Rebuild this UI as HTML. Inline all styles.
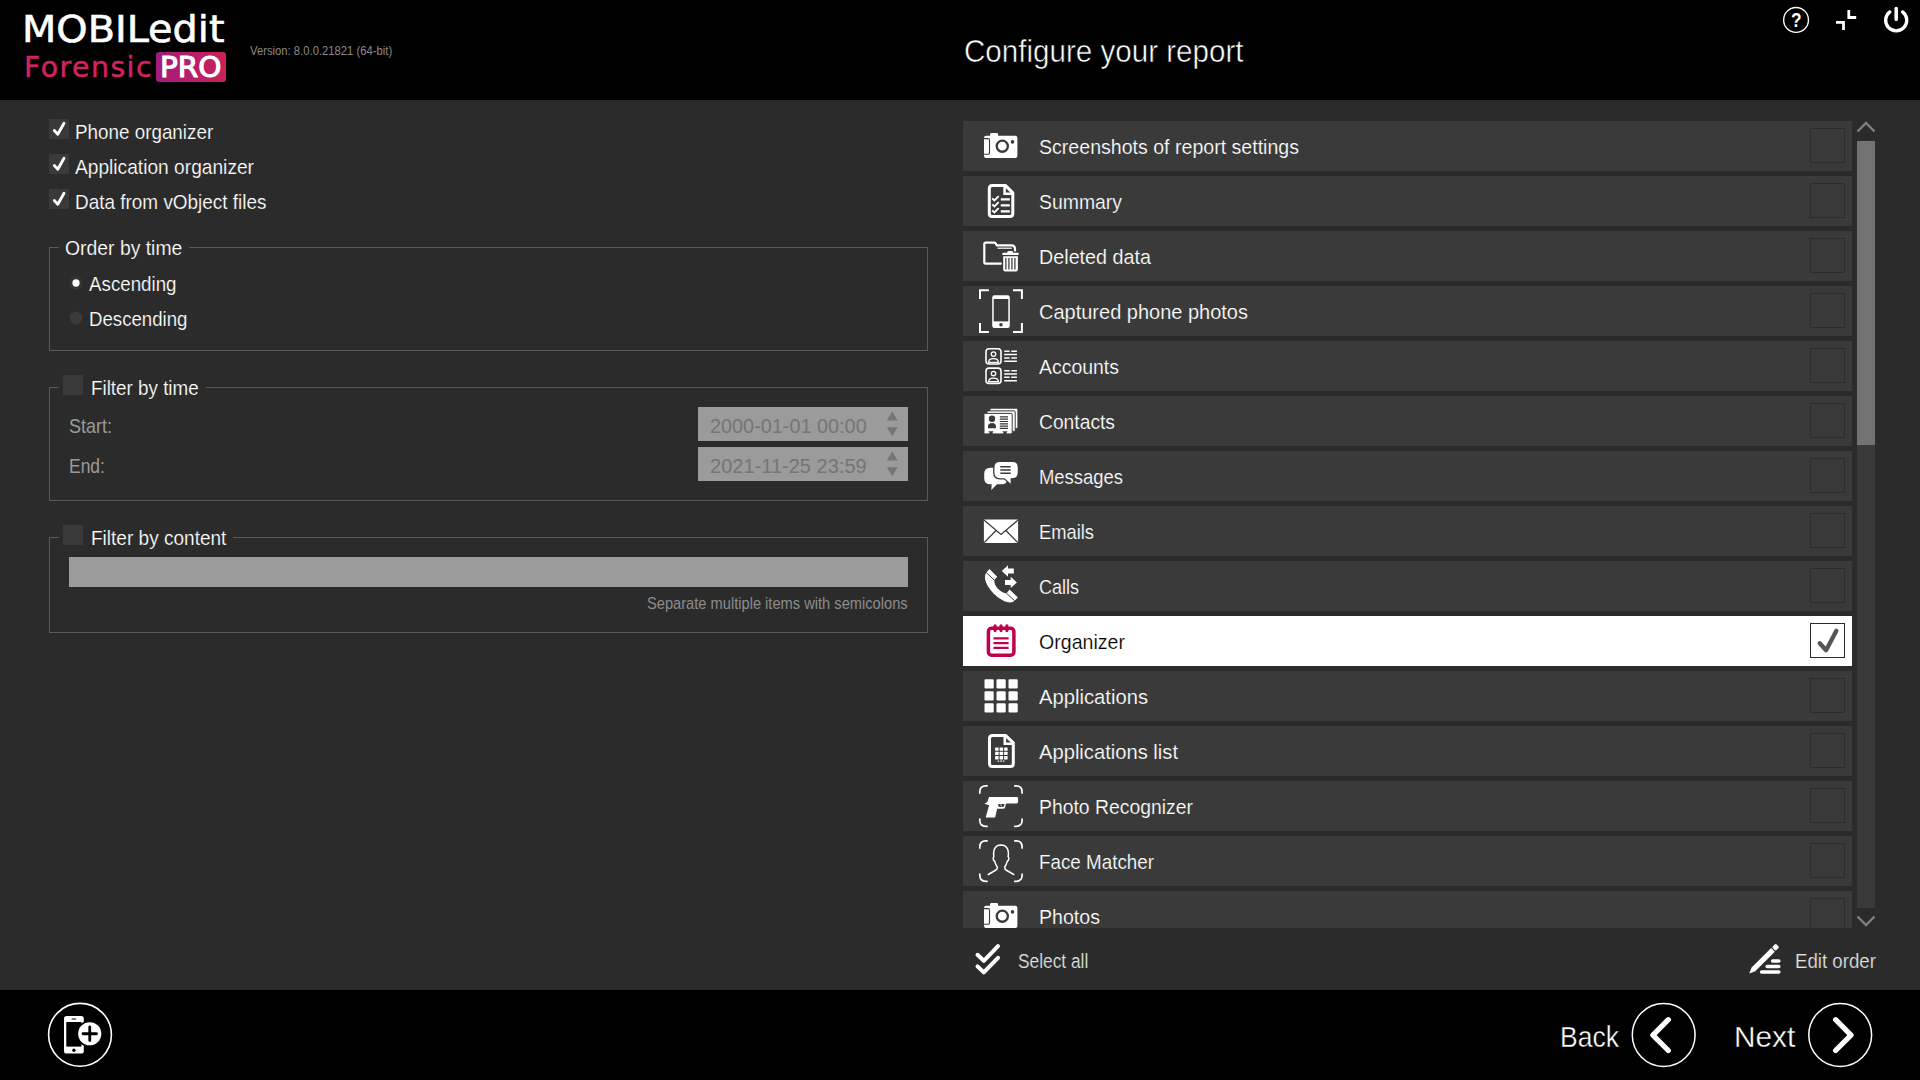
<!DOCTYPE html>
<html lang="en"><head><meta charset="utf-8"><title>MOBILedit Forensic PRO - Configure your report</title>
<style>
html,body{margin:0;padding:0;}
body{width:1920px;height:1080px;overflow:hidden;background:#2b2b2b;font-family:"Liberation Sans",sans-serif;color:#fff;position:relative;}
.abs,.t,svg.ic{position:absolute;}
.t{white-space:nowrap;transform-origin:0 50%;display:block;}
.lg{font-family:"DejaVu Sans","Liberation Sans",sans-serif;}
#header{left:0;top:0;width:1920px;height:100px;background:#000;}
#footer{left:0;top:990px;width:1920px;height:90px;background:#000;}
#left{left:0;top:100px;width:960px;height:890px;}
.pro{left:156px;top:52px;width:70px;height:29.5px;border-radius:3px;background:linear-gradient(90deg,#a31b7c,#c9225a);}
.cb{width:20px;height:20px;background:#3a3a3a;}
.cb svg,.chk svg,.inp svg{display:block;}
.grp{border:1px solid #595959;box-sizing:border-box;left:49px;width:879px;}
.gap{background:#2b2b2b;height:3px;}
.inp{background:#9b9b9b;}
#list{left:963px;top:121px;width:889px;height:807px;overflow:hidden;}
.row{left:0;width:889px;height:50px;background:#3a3a3a;}
.row.sel{background:#fff;}
.row .chk{left:847px;top:7px;width:33px;height:33px;border:1px solid #2d2d2d;}
.row.sel .chk{border-color:#2b2b2b;}
svg.ic{left:12px;top:0;width:52px;height:50px;}
#sbtrack{left:1857px;top:141px;width:18px;height:767px;background:#3a3a3a;}
#sbthumb{left:1857px;top:141px;width:18px;height:304px;background:#737373;}
</style></head><body>
<div id="header" class="abs">
<div class="abs pro"></div>
<span class="t lg" style="left:22px;top:10.77px;font-size:37.6px;line-height:37.6px;color:#fff;-webkit-text-stroke:.6px #fff;transform:scaleX(1.0586)">MOBILedit</span>
<span class="t lg" style="left:23.5px;top:53.05px;font-size:29px;line-height:29px;color:#d2235f;letter-spacing:1.5px;-webkit-text-stroke:.5px #d2235f;transform:scaleX(0.9772)">Forensic</span>
<span class="t lg" style="left:159.5px;top:53.05px;font-size:29px;line-height:29px;color:#fff;-webkit-text-stroke:1.1px #fff;transform:scaleX(1.0171)">PRO</span>
<span class="t" style="left:250.2px;top:45.13px;font-size:12.6px;line-height:12.6px;color:#8a8a8a;transform:scaleX(0.8947)">Version: 8.0.0.21821 (64-bit)</span>
<span class="t" style="left:963.5px;top:35.90px;font-size:30.6px;line-height:30.6px;color:#fff;-webkit-text-stroke:.55px #000;transform:scaleX(0.9668)">Configure your report</span>
<svg class="abs" style="left:1760px;top:0" width="160" height="40" viewBox="1760 0 160 40">
<circle cx="1796.05" cy="19.9" r="12.4" fill="none" stroke="#fff" stroke-width="1.35"/>
<text x="1796.2" y="27.3" text-anchor="middle" font-family="Liberation Sans, sans-serif" font-weight="bold" font-size="20.5" textLength="10.5" lengthAdjust="spacingAndGlyphs" fill="#fff">?</text>
<g fill="none" stroke="#fff" stroke-width="2.8"><path d="M1848.8 10v7.5h7.4M1836 22.3h7.5v7.7"/></g>
<path d="M1889.85 11.9a10.55 10.55 0 1 0 12.7 0" fill="none" stroke="#fff" stroke-width="3.3" stroke-linecap="round"/><path d="M1896.2 8.6v10.9" stroke="#fff" stroke-width="3.5" stroke-linecap="round"/>
</svg>
</div>
<div id="left" class="abs">
<div class="abs cb" style="left:49px;top:19px"><svg width="20" height="20" viewBox="0 0 20 20"><path d="M5.3 11.5l3.5 3.7 6.2-11" fill="none" stroke="#fff" stroke-width="2.8" stroke-linecap="round" stroke-linejoin="round"/></svg></div>
<div class="abs cb" style="left:49px;top:54px"><svg width="20" height="20" viewBox="0 0 20 20"><path d="M5.3 11.5l3.5 3.7 6.2-11" fill="none" stroke="#fff" stroke-width="2.8" stroke-linecap="round" stroke-linejoin="round"/></svg></div>
<div class="abs cb" style="left:49px;top:89px"><svg width="20" height="20" viewBox="0 0 20 20"><path d="M5.3 11.5l3.5 3.7 6.2-11" fill="none" stroke="#fff" stroke-width="2.8" stroke-linecap="round" stroke-linejoin="round"/></svg></div>
<div class="abs grp" style="top:147px;height:104px"></div><div class="abs gap" style="left:59px;top:146px;width:130px"></div>
<svg class="abs" style="left:68px;top:175px" width="16" height="52" viewBox="0 0 16 52"><circle cx="8" cy="8" r="6.4" fill="#3a3a3a"/><circle cx="8" cy="8" r="5" fill="#2e2e2e"/><circle cx="8" cy="8" r="3.65" fill="#fff"/><circle cx="8" cy="43" r="6.4" fill="#3a3a3a"/></svg>
<div class="abs grp" style="top:287px;height:114px"></div><div class="abs gap" style="left:59px;top:286px;width:147px"></div><div class="abs cb" style="left:63px;top:275px"></div>
<div class="abs inp" style="left:698px;top:307px;width:210px;height:34px"><svg width="210" height="34"><path d="M188.9 13.6l5.4-9.1 5.4 9.1zM188.9 20.3l5.4 9 5.4-9z" fill="#757575"/></svg></div>
<div class="abs inp" style="left:698px;top:347px;width:210px;height:34px"><svg width="210" height="34"><path d="M188.9 13.6l5.4-9.1 5.4 9.1zM188.9 20.3l5.4 9 5.4-9z" fill="#757575"/></svg></div>
<div class="abs grp" style="top:437px;height:96px"></div><div class="abs gap" style="left:59px;top:436px;width:174px"></div><div class="abs cb" style="left:63px;top:425px"></div>
<div class="abs inp" style="left:69px;top:457px;width:839px;height:30px"></div>
<span class="t" style="left:75px;top:22.32px;font-size:20.3px;line-height:20.3px;color:#fff;-webkit-text-stroke:.2px #2b2b2b;transform:scaleX(0.9285)">Phone organizer</span>
<span class="t" style="left:74.5px;top:57.32px;font-size:20.3px;line-height:20.3px;color:#fff;-webkit-text-stroke:.2px #2b2b2b;transform:scaleX(0.9451)">Application organizer</span>
<span class="t" style="left:75px;top:92.32px;font-size:20.3px;line-height:20.3px;color:#fff;-webkit-text-stroke:.2px #2b2b2b;transform:scaleX(0.9335)">Data from vObject files</span>
<span class="t" style="left:64.6px;top:138.32px;font-size:20.3px;line-height:20.3px;color:#fff;-webkit-text-stroke:.2px #2b2b2b;transform:scaleX(0.9548)">Order by time</span>
<span class="t" style="left:88.75px;top:174.32px;font-size:20.3px;line-height:20.3px;color:#fff;-webkit-text-stroke:.2px #2b2b2b;transform:scaleX(0.9243)">Ascending</span>
<span class="t" style="left:89px;top:209.32px;font-size:20.3px;line-height:20.3px;color:#fff;-webkit-text-stroke:.2px #2b2b2b;transform:scaleX(0.9195)">Descending</span>
<span class="t" style="left:91px;top:278.32px;font-size:20.3px;line-height:20.3px;color:#fff;-webkit-text-stroke:.2px #2b2b2b;transform:scaleX(0.9278)">Filter by time</span>
<span class="t" style="left:68.8px;top:316.12px;font-size:20.3px;line-height:20.3px;color:#9b9b9b;transform:scaleX(0.8872)">Start:</span>
<span class="t" style="left:68.8px;top:355.72px;font-size:20.3px;line-height:20.3px;color:#9b9b9b;transform:scaleX(0.8602)">End:</span>
<span class="t" style="left:709.6px;top:316.12px;font-size:20.3px;line-height:20.3px;color:#757575;transform:scaleX(0.9785)">2000-01-01 00:00</span>
<span class="t" style="left:709.6px;top:356.12px;font-size:20.3px;line-height:20.3px;color:#757575;transform:scaleX(0.9879)">2021-11-25 23:59</span>
<span class="t" style="left:90.9px;top:428.32px;font-size:20.3px;line-height:20.3px;color:#fff;-webkit-text-stroke:.2px #2b2b2b;transform:scaleX(0.9383)">Filter by content</span>
<span class="t" style="left:647.3px;top:495.84px;font-size:15.9px;line-height:15.9px;color:#8c8c8c;transform:scaleX(0.9221)">Separate multiple items with semicolons</span>
</div>
<div id="list" class="abs">
<div class="abs row" style="top:0px"><svg class="ic" viewBox="0 0 52 50"><path fill="#fff" d="M11.2 14.8h3.9v-1.4q0-1.4 1.4-1.4h5.2q1.4 0 1.4 1.4v1.4h17.1q2.2 0 2.2 2.2v17.8q0 2.2-2.2 2.2h-29q-2.2 0-2.2-2.2v-17.8q0-2.2 2.2-2.2z"/>
<circle cx="27.3" cy="25.2" r="5.55" fill="none" stroke="#3a3a3a" stroke-width="2.3"/>
<circle cx="37.5" cy="20.9" r="1.8" fill="#3a3a3a"/>
<path d="M9 17.6h4.2q1.3 0 1.3 1.3v13q0 1.3-1.3 1.3h-4.2" fill="none" stroke="#3a3a3a" stroke-width="1.1"/></svg><span class="t" style="left:76px;top:15.90px;font-size:20.2px;line-height:20.2px;color:#fff;-webkit-text-stroke:.2px #3a3a3a;transform:scaleX(0.9695)">Screenshots of report settings</span><div class="abs chk"></div></div>
<div class="abs row" style="top:55px"><svg class="ic" viewBox="0 0 52 50"><path d="M30.3 9.4h-13q-3 0-3 3v25.2q0 3 3 3h17.5q3 0 3-3v-20.7z" fill="none" stroke="#fff" stroke-width="3" stroke-linejoin="round"/>
<path d="M29.6 8.5v9.2h9.2" fill="none" stroke="#fff" stroke-width="2.6"/>
<g fill="none" stroke="#fff" stroke-width="1.9"><path d="M17.2 22.3l2.2 2.2 4.3-4.3M17.2 28.3l2.2 2.2 4.3-4.3M17.2 34.3l2.2 2.2 4.3-4.3"/>
<path d="M25.8 23.4h9M25.8 29.4h9M25.8 35.4h9" stroke-width="2.1"/></g></svg><span class="t" style="left:76px;top:15.90px;font-size:20.2px;line-height:20.2px;color:#fff;-webkit-text-stroke:.2px #3a3a3a;transform:scaleX(0.9609)">Summary</span><div class="abs chk"></div></div>
<div class="abs row" style="top:110px"><svg class="ic" viewBox="0 0 52 50"><path d="M25.8 32.7h-15.1q-1.4 0-1.4-1.4v-18.3q0-1.4 1.4-1.4h8.4q1 0 1.5.8l1.2 1.9h14.6q3.6 0 3.6 3.6v1.6" fill="none" stroke="#fff" stroke-width="2.2" stroke-linecap="round" stroke-linejoin="round"/>
<path d="M22.6 17.2h14.2" stroke="#fff" stroke-width="1.2" fill="none"/>
<path fill="#fff" stroke="#3a3a3a" stroke-width="1.8" paint-order="stroke" d="M27.3 22.4q0-.6.6-.6h4.1q.3-1.7 1.7-1.7h3q1.4 0 1.7 1.7h4.7q.6 0 .6.6v1.3q0 .4-.6.4h-15.2q-.6 0-.6-.4zM28.2 25.2h14.7v13.4q0 2-2 2h-10.7q-2 0-2-2z"/>
<path d="M30.9 27v11.6M33.9 27v11.6M36.9 27v11.6M39.9 27v11.6" stroke="#3a3a3a" stroke-width="1.25" fill="none"/></svg><span class="t" style="left:76px;top:15.90px;font-size:20.2px;line-height:20.2px;color:#fff;-webkit-text-stroke:.2px #3a3a3a;transform:scaleX(0.9783)">Deleted data</span><div class="abs chk"></div></div>
<div class="abs row" style="top:165px"><svg class="ic" viewBox="0 0 52 50"><path d="M5 13.1v-8.9h8.9M38 4.2h8.9v8.9M46.9 37v8.9h-8.9M13.9 45.9h-8.9v-8.9" fill="none" stroke="#fff" stroke-width="2"/>
<rect x="17.2" y="9.2" width="17.6" height="32.9" rx="2.3" fill="#fff"/>
<rect x="18.7" y="13" width="14.6" height="22.4" fill="#3a3a3a"/>
<circle cx="26" cy="38.8" r="1.8" fill="#3a3a3a"/></svg><span class="t" style="left:76px;top:15.90px;font-size:20.2px;line-height:20.2px;color:#fff;-webkit-text-stroke:.2px #3a3a3a;transform:scaleX(0.9904)">Captured phone photos</span><div class="abs chk"></div></div>
<div class="abs row" style="top:220px"><svg class="ic" viewBox="0 0 52 50"><rect x="11" y="7.7" width="15" height="15.3" rx="3" fill="none" stroke="#fff" stroke-width="1.6"/>
<circle cx="18.5" cy="13.1" r="2.2" fill="none" stroke="#fff" stroke-width="1.3"/>
<path d="M13.6 21.3q0-3.6 4.9-3.6t4.9 3.6z" fill="none" stroke="#fff" stroke-width="1.3" stroke-linejoin="round"/>
<path d="M29.2 10.3h5.4m1.7 0h5.6M29.2 13.6h12.7M29.2 16.9h5.4m1.7 0h5.6M29.2 20.3h12.7" stroke="#fff" stroke-width="1.5" fill="none"/><rect x="11" y="27.1" width="15" height="15.3" rx="3" fill="none" stroke="#fff" stroke-width="1.6"/>
<circle cx="18.5" cy="32.5" r="2.2" fill="none" stroke="#fff" stroke-width="1.3"/>
<path d="M13.6 40.7q0-3.6 4.9-3.6t4.9 3.6z" fill="none" stroke="#fff" stroke-width="1.3" stroke-linejoin="round"/>
<path d="M29.2 29.7h5.4m1.7 0h5.6M29.2 33h12.7M29.2 36.3h5.4m1.7 0h5.6M29.2 39.7h12.7" stroke="#fff" stroke-width="1.5" fill="none"/></svg><span class="t" style="left:76px;top:15.90px;font-size:20.2px;line-height:20.2px;color:#fff;-webkit-text-stroke:.2px #3a3a3a;transform:scaleX(0.9633)">Accounts</span><div class="abs chk"></div></div>
<div class="abs row" style="top:275px"><svg class="ic" viewBox="0 0 52 50"><rect x="15.4" y="12.8" width="27" height="19.5" rx="1" fill="#fff"/>
<rect x="12" y="14.9" width="28.2" height="20.5" rx="1" fill="#fff" stroke="#3a3a3a" stroke-width="1"/>
<rect x="9" y="17.4" width="28.2" height="20.5" rx="1.2" fill="#fff" stroke="#3a3a3a" stroke-width="1"/>
<circle cx="17" cy="22.7" r="3.2" fill="#3a3a3a"/>
<path d="M13 32.3v-1.6q0-3.7 4-3.7t4 3.7v1.6z" fill="#3a3a3a"/>
<path d="M24.8 20.9h8.2M24.8 23.2h8.2M24.8 25.5h8.2M24.8 27.8h8.2M24.8 30.1h8.2M24.8 32.4h8.2" stroke="#3a3a3a" stroke-width="1.2" fill="none"/>
<path d="M13.4 35.3h5.2l-1 1.1v1.6h-3.2v-1.6zM27.4 35.3h5.2l-1 1.1v1.6h-3.2v-1.6z" fill="#3a3a3a"/></svg><span class="t" style="left:76px;top:15.90px;font-size:20.2px;line-height:20.2px;color:#fff;-webkit-text-stroke:.2px #3a3a3a;transform:scaleX(0.9539)">Contacts</span><div class="abs chk"></div></div>
<div class="abs row" style="top:330px"><svg class="ic" viewBox="0 0 52 50"><path fill="#fff" d="M15.5 16.7h11q6 0 6 6v4.6q0 6-6 6h-4.5l-5.7 5.8.4-5.8h-1.2q-6.3 0-6.3-6v-4.6q0-6 6.3-6z"/>
<path fill="#fff" stroke="#3a3a3a" stroke-width="1.3" d="M24.8 10.4h12.6q6 0 6 6v5.4q0 6-6 6h-1.2l.2 6.4-7-6.4h-4.6q-6 0-6-6v-5.4q0-6 6-6z"/>
<path d="M25.3 15.7h10.4M25.3 19h10.4M25.3 22.3h10.4" stroke="#3a3a3a" stroke-width="1.5" fill="none"/></svg><span class="t" style="left:76px;top:15.90px;font-size:20.2px;line-height:20.2px;color:#fff;-webkit-text-stroke:.2px #3a3a3a;transform:scaleX(0.9129)">Messages</span><div class="abs chk"></div></div>
<div class="abs row" style="top:385px"><svg class="ic" viewBox="0 0 52 50"><rect x="8.9" y="13.6" width="34.2" height="23.3" rx=".8" fill="#fff"/>
<path d="M9.2 14.2l16.8 14.2 16.8-14.2M9.2 36.6l11.6-11.8M42.8 36.6l-11.6-11.8" fill="none" stroke="#3a3a3a" stroke-width="1.3"/></svg><span class="t" style="left:76px;top:15.90px;font-size:20.2px;line-height:20.2px;color:#fff;-webkit-text-stroke:.2px #3a3a3a;transform:scaleX(0.9079)">Emails</span><div class="abs chk"></div></div>
<div class="abs row" style="top:440px"><svg class="ic" viewBox="0 0 52 50"><path fill="#fff" d="M14.5 8L22.2 15.7L19.3 19Q19 23.5 23.2 28.1Q27.5 32.3 31.5 32.3L34.6 28.6L42.9 36.4L39.6 39.7Q37.5 42 33 41.3Q26 39.7 18.5 32.5Q11.5 25 10 18Q9.3 14 11.3 11.5Z"/>
<path d="M11.3 11.6l8.1 7.6M31.4 32.2l8.3 7.6" stroke="#3a3a3a" stroke-width="1" fill="none"/>
<path fill="#fff" d="M26.8 10l6.2-5.7v3.2h5.8v5h-5.8v3.2zM41.9 21.4l-6.2-5.7v3.2h-5.7v5h5.7v3.2z"/></svg><span class="t" style="left:76px;top:15.90px;font-size:20.2px;line-height:20.2px;color:#fff;-webkit-text-stroke:.2px #3a3a3a;transform:scaleX(0.8914)">Calls</span><div class="abs chk"></div></div>
<div class="abs row sel" style="top:495px"><svg class="ic" viewBox="0 0 52 50"><rect x="13.4" y="12.3" width="25.5" height="27" rx="3.2" fill="none" stroke="#c2004b" stroke-width="3.5"/>
<path d="M20.1 9.9v4.7M26 9.9v4.7M31.9 9.9v4.7" stroke="#c2004b" stroke-width="3.2" stroke-linecap="round" fill="none"/>
<path d="M18.5 22.4h15.1M18.5 27.1h15.1M18.5 31.8h15.1" stroke="#c2004b" stroke-width="2.2" fill="none"/></svg><span class="t" style="left:76px;top:15.90px;font-size:20.2px;line-height:20.2px;color:#000;-webkit-text-stroke:.2px #fff;transform:scaleX(0.9702)">Organizer</span><div class="abs chk"><svg width="33" height="33" viewBox="0 0 33 33"><path d="M8.7 19.2l6.4 7 10.3-19.4" fill="none" stroke="#555" stroke-width="4.3" stroke-linecap="round" stroke-linejoin="round"/></svg></div></div>
<div class="abs row" style="top:550px"><svg class="ic" viewBox="0 0 52 50"><rect x="9.5" y="8.2" width="9.2" height="9.2" rx="1.2" fill="#fff"/><rect x="21.5" y="8.2" width="9.2" height="9.2" rx="1.2" fill="#fff"/><rect x="33.5" y="8.2" width="9.2" height="9.2" rx="1.2" fill="#fff"/><rect x="9.5" y="20.2" width="9.2" height="9.2" rx="1.2" fill="#fff"/><rect x="21.5" y="20.2" width="9.2" height="9.2" rx="1.2" fill="#fff"/><rect x="33.5" y="20.2" width="9.2" height="9.2" rx="1.2" fill="#fff"/><rect x="9.5" y="32.2" width="9.2" height="9.2" rx="1.2" fill="#fff"/><rect x="21.5" y="32.2" width="9.2" height="9.2" rx="1.2" fill="#fff"/><rect x="33.5" y="32.2" width="9.2" height="9.2" rx="1.2" fill="#fff"/></svg><span class="t" style="left:76px;top:15.90px;font-size:20.2px;line-height:20.2px;color:#fff;-webkit-text-stroke:.2px #3a3a3a;transform:scaleX(1.0013)">Applications</span><div class="abs chk"></div></div>
<div class="abs row" style="top:605px"><svg class="ic" viewBox="0 0 52 50"><path d="M30.5 9.4h-13q-3 0-3 3v25.2q0 3 3 3h17.8q3 0 3-3v-20.7z" fill="none" stroke="#fff" stroke-width="3" stroke-linejoin="round"/>
<path d="M29.8 8.5v9.2h9.2" fill="none" stroke="#fff" stroke-width="2.6"/><rect x="20.1" y="21.4" width="3.5" height="3.4" rx=".5" fill="#fff"/><rect x="24.6" y="21.4" width="3.5" height="3.4" rx=".5" fill="#fff"/><rect x="29.1" y="21.4" width="3.5" height="3.4" rx=".5" fill="#fff"/><rect x="20.1" y="25.7" width="3.5" height="3.4" rx=".5" fill="#fff"/><rect x="24.6" y="25.7" width="3.5" height="3.4" rx=".5" fill="#fff"/><rect x="29.1" y="25.7" width="3.5" height="3.4" rx=".5" fill="#fff"/><rect x="20.1" y="30" width="3.5" height="3.4" rx=".5" fill="#fff"/><rect x="24.6" y="30" width="3.5" height="3.4" rx=".5" fill="#fff"/><rect x="29.1" y="30" width="3.5" height="3.4" rx=".5" fill="#fff"/><rect x="22.6" y="34.5" width="1.6" height="1.2" fill="#fff"/><rect x="25.2" y="34.5" width="1.6" height="1.2" fill="#fff"/><rect x="27.8" y="34.5" width="1.6" height="1.2" fill="#fff"/></svg><span class="t" style="left:76px;top:15.90px;font-size:20.2px;line-height:20.2px;color:#fff;-webkit-text-stroke:.2px #3a3a3a;transform:scaleX(0.9990)">Applications list</span><div class="abs chk"></div></div>
<div class="abs row" style="top:660px"><svg class="ic" viewBox="0 0 52 50"><path d="M4.8 12.1v-1.3q0-6 6-6h1.3M39.8 4.8h1.3q6 0 6 6v1.3M47.1 38v1.3q0 6-6 6h-1.3M12.1 45.3h-1.3q-6 0-6-6v-1.3" fill="none" stroke="#fff" stroke-width="1.7" stroke-linecap="round"/><path fill="#fff" d="M14.1 15.9h27.6q1.4 0 1.4 1.4v3.7q0 1.4-1.4 1.4h-9.6q-1.2 0-1.4 1.1l-.5 2.4q-.4 1.9-2.4 1.9h-5.6l-2.1 8.6h-9.4l3.4-12.2-4.9-1.5 2.4-1.3q.8-.5 1-1.5z"/>
<path d="M23.3 23h6.2l-.4 1.9q-.3 1.1-1.5 1.1h-2.9q-1.7 0-1.5-1.7z" fill="#3a3a3a"/>
<path d="M25.7 23.3l.8 2.2" stroke="#fff" stroke-width=".8"/></svg><span class="t" style="left:76px;top:15.90px;font-size:20.2px;line-height:20.2px;color:#fff;-webkit-text-stroke:.2px #3a3a3a;transform:scaleX(0.9596)">Photo Recognizer</span><div class="abs chk"></div></div>
<div class="abs row" style="top:715px"><svg class="ic" viewBox="0 0 52 50"><path d="M4.8 12.1v-1.3q0-6 6-6h1.3M39.8 4.8h1.3q6 0 6 6v1.3M47.1 38v1.3q0 6-6 6h-1.3M12.1 45.3h-1.3q-6 0-6-6v-1.3" fill="none" stroke="#fff" stroke-width="1.7" stroke-linecap="round"/><path d="M13.3 38.5l6.8-4q2.3-1.2 2.3-3.3-1.7-2.3-2.8-6.1-1.2-.3-1.4-2.2-.2-1.7.6-2.1-.5-4.6.4-7.2 1.7-4.6 6.8-4.7 5.1.1 6.8 4.7.9 2.6.4 7.2.8.4.6 2.1-.2 1.9-1.4 2.2-1.1 3.8-2.8 6.1 0 2.1 2.3 3.3l6.8 4" fill="none" stroke="#fff" stroke-width="1.5" stroke-linecap="round" stroke-linejoin="round"/></svg><span class="t" style="left:76px;top:15.90px;font-size:20.2px;line-height:20.2px;color:#fff;-webkit-text-stroke:.2px #3a3a3a;transform:scaleX(0.9318)">Face Matcher</span><div class="abs chk"></div></div>
<div class="abs row" style="top:770px"><svg class="ic" viewBox="0 0 52 50"><path fill="#fff" d="M11.2 14.8h3.9v-1.4q0-1.4 1.4-1.4h5.2q1.4 0 1.4 1.4v1.4h17.1q2.2 0 2.2 2.2v17.8q0 2.2-2.2 2.2h-29q-2.2 0-2.2-2.2v-17.8q0-2.2 2.2-2.2z"/>
<circle cx="27.3" cy="25.2" r="5.55" fill="none" stroke="#3a3a3a" stroke-width="2.3"/>
<circle cx="37.5" cy="20.9" r="1.8" fill="#3a3a3a"/>
<path d="M9 17.6h4.2q1.3 0 1.3 1.3v13q0 1.3-1.3 1.3h-4.2" fill="none" stroke="#3a3a3a" stroke-width="1.1"/></svg><span class="t" style="left:76px;top:15.90px;font-size:20.2px;line-height:20.2px;color:#fff;-webkit-text-stroke:.2px #3a3a3a;transform:scaleX(0.9704)">Photos</span><div class="abs chk"></div></div>
</div>
<div id="sbtrack" class="abs"></div><div id="sbthumb" class="abs"></div>
<svg class="abs" style="left:960px;top:115px" width="960" height="870" viewBox="960 115 960 870">
<g fill="none" stroke="#808080" stroke-width="2.3"><path d="M1857.5 131.5l8.5-8.5 8.5 8.5"/><path d="M1857.5 916.5l8.5 8.5 8.5-8.5"/></g>
<g fill="none" stroke="#fff" stroke-width="4" stroke-linecap="round" stroke-linejoin="round"><path d="M977.5 954.8l6.3 6 14.2-14.6M977.5 966.4l6.3 6 14.2-14.6"/></g>
<g transform="translate(1749.2 973.6) rotate(-45)" fill="#fff"><path d="M0 0L6-2.6H33.6V2.6H6Z"/><rect x="34.7" y="-2.6" width="5.3" height="5.2" rx="1.4"/></g>
<g stroke="#fff" stroke-width="3.6" stroke-linecap="round"><path d="M1772.7 961h6.1M1767.2 966.5h11.6M1761.7 972h17.1"/></g>
</svg>
<span class="t" style="left:1017.9px;top:952.11px;font-size:19.6px;line-height:19.6px;color:#e0e0e0;-webkit-text-stroke:.2px #2b2b2b;transform:scaleX(0.8841)">Select all</span>
<span class="t" style="left:1794.7px;top:952.11px;font-size:19.6px;line-height:19.6px;color:#e0e0e0;-webkit-text-stroke:.2px #2b2b2b;transform:scaleX(0.9523)">Edit order</span>
<div id="footer" class="abs">
<svg class="abs" style="left:0;top:0" width="1920" height="90" viewBox="0 990 1920 90">
<circle cx="80" cy="1034.8" r="31.4" fill="none" stroke="#fff" stroke-width="1.6"/>
<rect x="64" y="1016" width="19.8" height="37.6" rx="2.6" fill="#fff"/><rect x="66.3" y="1022" width="15.2" height="24.6" fill="#000"/><circle cx="73.9" cy="1050.2" r="1.7" fill="#000"/><rect x="71.5" y="1018.5" width="4.8" height="1.1" rx=".5" fill="#000"/>
<circle cx="89.75" cy="1033.75" r="13.3" fill="#000"/><circle cx="89.75" cy="1033.75" r="11.6" fill="#fff"/><path d="M83 1033.75h13.5M89.75 1027v13.5" stroke="#000" stroke-width="2.8" stroke-linecap="round"/>
<circle cx="1663.7" cy="1035" r="31.4" fill="none" stroke="#fff" stroke-width="1.5"/><path d="M1668.3 1019.7L1652.9 1035.1 1668.3 1050.5" fill="none" stroke="#fff" stroke-width="5.3" stroke-linecap="round" stroke-linejoin="round"/>
<circle cx="1840.2" cy="1035" r="31.4" fill="none" stroke="#fff" stroke-width="1.5"/><path d="M1835.6 1019.7L1851 1035.1 1835.6 1050.5" fill="none" stroke="#fff" stroke-width="5.3" stroke-linecap="round" stroke-linejoin="round"/>
</svg>
<span class="t" style="left:1560.2px;top:31.94px;font-size:30.2px;line-height:30.2px;color:#fff;-webkit-text-stroke:.4px #000;transform:scaleX(0.8790)">Back</span>
<span class="t" style="left:1733.7px;top:31.94px;font-size:30.2px;line-height:30.2px;color:#fff;-webkit-text-stroke:.4px #000;transform:scaleX(0.9875)">Next</span>
</div>
</body></html>
